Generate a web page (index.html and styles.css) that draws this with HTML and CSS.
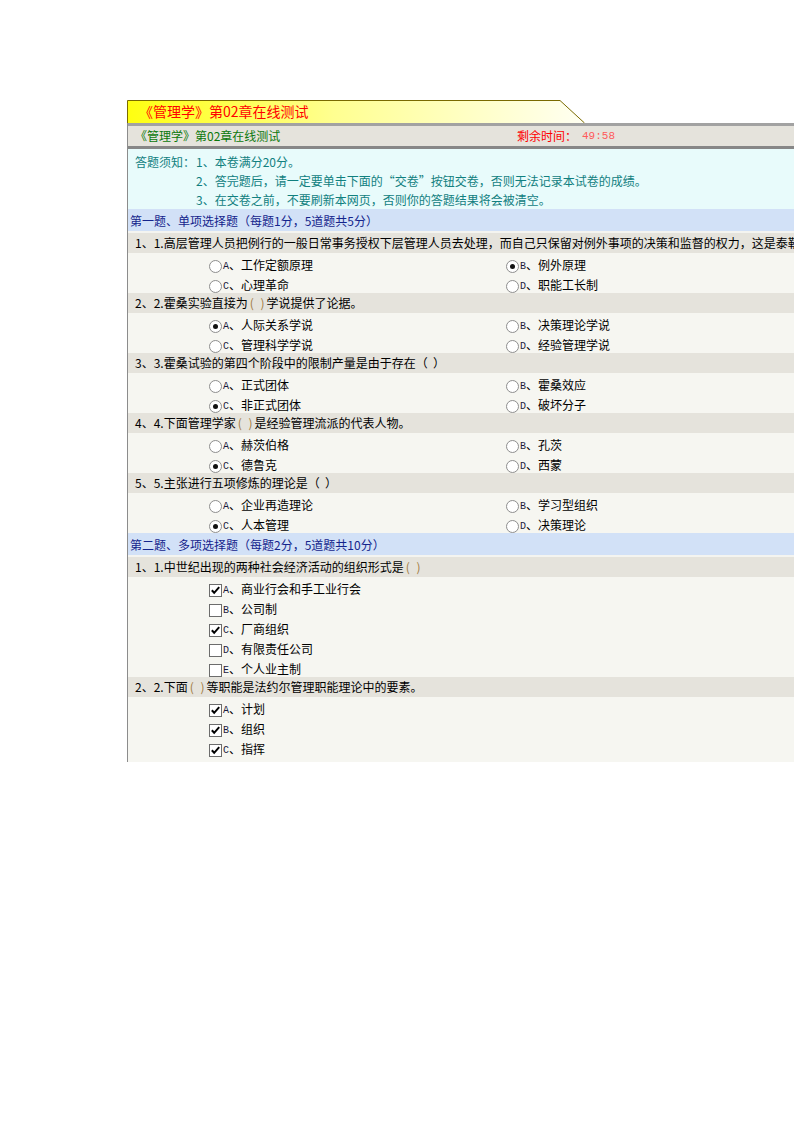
FILE: index.html
```html
<!DOCTYPE html>
<html lang="zh-CN">
<head>
<meta charset="utf-8">
<title>《管理学》第02章在线测试</title>
<link rel="stylesheet" href="styles.css">
</head>
<body>
<div class="page">
  <div class="tab">
    <svg class="tab-bg" width="458" height="23" viewBox="0 0 458 23">
      <defs>
        <linearGradient id="tg" x1="0" y1="0" x2="1" y2="0">
          <stop offset="0" stop-color="#ffff10"/>
          <stop offset="0.45" stop-color="#ffff90"/>
          <stop offset="1" stop-color="#fffff2"/>
        </linearGradient>
      </defs>
      <path d="M0.5 23 L0.5 0.5 L433 0.5 L457.5 23 Z" fill="url(#tg)"/>
      <path d="M0.5 23 L0.5 0.5 L433 0.5 L457.5 23" fill="none" stroke="#7a6a00" stroke-width="1"/>
    </svg>
    <span class="tab-title">《管理学》第02章在线测试</span>
  </div>
  <div class="panel">
    <div class="bar-top"></div>
    <div class="head">
      <span class="head-title">《管理学》第02章在线测试</span>
      <span class="timer-label">剩余时间：</span><span class="timer">49:58</span>
    </div>
    <div class="bar-bottom"></div>
    <div class="notice">
      <div class="nline"><span class="nlabel">答题须知：</span>1、本卷满分20分。</div>
      <div class="nline indent">2、答完题后，请一定要单击下面的“交卷”按钮交卷，否则无法记录本试卷的成绩。</div>
      <div class="nline indent">3、在交卷之前，不要刷新本网页，否则你的答题结果将会被清空。</div>
    </div>

    <div class="section">第一题、单项选择题（每题1分，5道题共5分）</div>
    <div class="gap"></div>
    <div class="q"><span class="qtext">1、1.高层管理人员把例行的一般日常事务授权下层管理人员去处理，而自己只保留对例外事项的决策和监督的权力，这是泰勒提出的（ &nbsp;）。</span></div>
    <div class="opts two">
      <div class="opt"><span class="radio"></span><span class="lbl"><span class="key">A</span>、工作定额原理</span></div>
      <div class="opt"><span class="radio on"></span><span class="lbl"><span class="key">B</span>、例外原理</span></div>
      <div class="opt"><span class="radio"></span><span class="lbl"><span class="key">C</span>、心理革命</span></div>
      <div class="opt"><span class="radio"></span><span class="lbl"><span class="key">D</span>、职能工长制</span></div>
    </div>
    <div class="q"><span class="qtext">2、2.霍桑实验直接为<span class="paren">( )</span>学说提供了论据。</span></div>
    <div class="opts two">
      <div class="opt"><span class="radio on"></span><span class="lbl"><span class="key">A</span>、人际关系学说</span></div>
      <div class="opt"><span class="radio"></span><span class="lbl"><span class="key">B</span>、决策理论学说</span></div>
      <div class="opt"><span class="radio"></span><span class="lbl"><span class="key">C</span>、管理科学学说</span></div>
      <div class="opt"><span class="radio"></span><span class="lbl"><span class="key">D</span>、经验管理学说</span></div>
    </div>
    <div class="q"><span class="qtext">3、3.霍桑试验的第四个阶段中的限制产量是由于存在（ &nbsp;）</span></div>
    <div class="opts two">
      <div class="opt"><span class="radio"></span><span class="lbl"><span class="key">A</span>、正式团体</span></div>
      <div class="opt"><span class="radio"></span><span class="lbl"><span class="key">B</span>、霍桑效应</span></div>
      <div class="opt"><span class="radio on"></span><span class="lbl"><span class="key">C</span>、非正式团体</span></div>
      <div class="opt"><span class="radio"></span><span class="lbl"><span class="key">D</span>、破坏分子</span></div>
    </div>
    <div class="q"><span class="qtext">4、4.下面管理学家<span class="paren">( )</span>是经验管理流派的代表人物。</span></div>
    <div class="opts two">
      <div class="opt"><span class="radio"></span><span class="lbl"><span class="key">A</span>、赫茨伯格</span></div>
      <div class="opt"><span class="radio"></span><span class="lbl"><span class="key">B</span>、孔茨</span></div>
      <div class="opt"><span class="radio on"></span><span class="lbl"><span class="key">C</span>、德鲁克</span></div>
      <div class="opt"><span class="radio"></span><span class="lbl"><span class="key">D</span>、西蒙</span></div>
    </div>
    <div class="q"><span class="qtext">5、5.主张进行五项修炼的理论是（ &nbsp;）</span></div>
    <div class="opts two">
      <div class="opt"><span class="radio"></span><span class="lbl"><span class="key">A</span>、企业再造理论</span></div>
      <div class="opt"><span class="radio"></span><span class="lbl"><span class="key">B</span>、学习型组织</span></div>
      <div class="opt"><span class="radio on"></span><span class="lbl"><span class="key">C</span>、人本管理</span></div>
      <div class="opt"><span class="radio"></span><span class="lbl"><span class="key">D</span>、决策理论</span></div>
    </div>

    <div class="section">第二题、多项选择题（每题2分，5道题共10分）</div>
    <div class="gap"></div>
    <div class="q"><span class="qtext">1、1.中世纪出现的两种社会经济活动的组织形式是<span class="paren">( )</span></span></div>
    <div class="opts one">
      <div class="opt"><span class="check"><svg width="13" height="13" viewBox="0 0 13 13"><polyline points="2.8,6.2 5.2,8.8 10.2,3.2" fill="none" stroke="#000" stroke-width="2"/></svg></span><span class="lbl"><span class="key">A</span>、商业行会和手工业行会</span></div>
      <div class="opt"><span class="check"></span><span class="lbl"><span class="key">B</span>、公司制</span></div>
      <div class="opt"><span class="check"><svg width="13" height="13" viewBox="0 0 13 13"><polyline points="2.8,6.2 5.2,8.8 10.2,3.2" fill="none" stroke="#000" stroke-width="2"/></svg></span><span class="lbl"><span class="key">C</span>、厂商组织</span></div>
      <div class="opt"><span class="check"></span><span class="lbl"><span class="key">D</span>、有限责任公司</span></div>
      <div class="opt"><span class="check"></span><span class="lbl"><span class="key">E</span>、个人业主制</span></div>
    </div>
    <div class="q"><span class="qtext">2、2.下面<span class="paren">( )</span>等职能是法约尔管理职能理论中的要素。</span></div>
    <div class="opts one last">
      <div class="opt"><span class="check"><svg width="13" height="13" viewBox="0 0 13 13"><polyline points="2.8,6.2 5.2,8.8 10.2,3.2" fill="none" stroke="#000" stroke-width="2"/></svg></span><span class="lbl"><span class="key">A</span>、计划</span></div>
      <div class="opt"><span class="check"><svg width="13" height="13" viewBox="0 0 13 13"><polyline points="2.8,6.2 5.2,8.8 10.2,3.2" fill="none" stroke="#000" stroke-width="2"/></svg></span><span class="lbl"><span class="key">B</span>、组织</span></div>
      <div class="opt"><span class="check"><svg width="13" height="13" viewBox="0 0 13 13"><polyline points="2.8,6.2 5.2,8.8 10.2,3.2" fill="none" stroke="#000" stroke-width="2"/></svg></span><span class="lbl"><span class="key">C</span>、指挥</span></div>
    </div>
  </div>
</div>
</body>
</html>
```

FILE: styles.css
```css
html, body {
  margin: 0;
  padding: 0;
  overflow: hidden;
  background: #ffffff;
}

body {
  font-family: "Noto Sans CJK SC", "Liberation Sans", sans-serif;
  font-size: 12px;
  color: #000000;
}

.page {
  padding: 100px 0 0 127px;
  width: 667px;
  overflow: hidden;
}

.tab {
  position: relative;
  width: 458px;
  height: 23px;
}

.tab-bg {
  position: absolute;
  left: 0;
  top: 0;
}

.tab-title {
  position: relative;
  display: block;
  padding-left: 12px;
  color: #ff0000;
  font-size: 14px;
  line-height: 23px;
  white-space: nowrap;
}

.panel {
  border-left: 1px solid #8c8c8c;
}

.bar-top {
  height: 3px;
  background: #a2a2a2;
}

.bar-bottom {
  height: 3px;
  background: #878787;
}

.head {
  height: 20px;
  background: #e5e3dc;
  display: flex;
  align-items: center;
  line-height: 20px;
  white-space: nowrap;
}

.head-title {
  width: 382px;
  flex: none;
  padding-left: 7px;
  color: #0b780b;
}

.timer-label {
  color: #ff0000;
}

.timer {
  margin-left: 5px;
  font-family: "Liberation Mono", monospace;
  font-size: 11px;
  color: #ff5a5a;
}

.notice {
  background: #e8fbfb;
  padding: 3px 0 0 7px;
  color: #11807f;
}

.nline {
  height: 19px;
  line-height: 19px;
  white-space: nowrap;
}

.nline.indent {
  padding-left: 61px;
}

.nlabel {
  display: inline-block;
  width: 61px;
}

.section {
  height: 21px;
  padding-top: 1px;
  line-height: 21px;
  padding-left: 2px;
  background: #d2e1f7;
  color: #14248c;
  white-space: nowrap;
}

.gap {
  height: 2px;
  background: #f4f4f0;
}

.q {
  height: 20px;
  line-height: 20px;
  padding-left: 7px;
  background: #e5e3dc;
  white-space: nowrap;
  overflow: hidden;
}

.paren {
  display: inline-block;
  margin: 0 2px;
  word-spacing: 4px;
  color: #a07a40;
}

.opts {
  background: #f6f6f1;
  padding-left: 81px;
}

.opts.two {
  display: grid;
  grid-template-columns: 297px 297px;
}

.opts.last {
  padding-bottom: 5px;
}

.opt {
  height: 14px;
  padding-top: 6px;
  line-height: 14px;
  display: flex;
  align-items: center;
  white-space: nowrap;
}

.lbl {
  margin-left: 1px;
}

.radio {
  width: 13px;
  height: 13px;
  box-sizing: border-box;
  border: 1px solid #8e8e8e;
  border-radius: 50%;
  background: #ffffff;
  display: flex;
  align-items: center;
  justify-content: center;
  flex: none;
}

.radio.on::after {
  content: "";
  width: 5px;
  height: 5px;
  border-radius: 50%;
  background: #111111;
}

.check {
  width: 13px;
  height: 13px;
  box-sizing: border-box;
  border: 1px solid #6c6c6c;
  background: #ffffff;
  flex: none;
  position: relative;
}

.check svg {
  position: absolute;
  left: -1px;
  top: -1px;
}

.key {
  font-family: "Liberation Mono", monospace;
  font-size: 10px;
  vertical-align: 1px;
  color: #1a1a3a;
}
```
